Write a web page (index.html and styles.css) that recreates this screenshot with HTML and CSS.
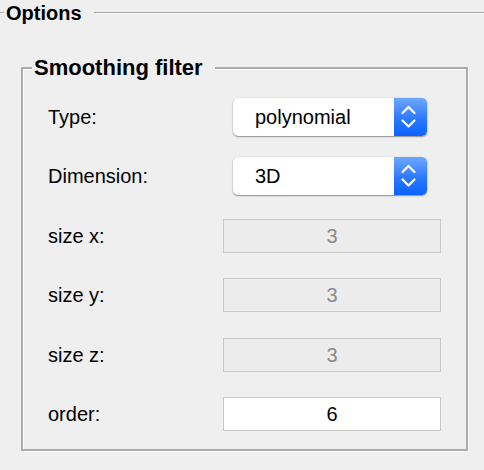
FILE: index.html
```html
<!DOCTYPE html>
<html>
<head>
<meta charset="utf-8">
<link rel="stylesheet" href="styles.css">
</head>
<body>
<div class="panel">
  <div class="options-title">
    <span class="rule rule-lead"></span>
    <span class="title-text">Options</span>
    <span class="rule rule-fill"></span>
  </div>
  <fieldset class="group">
    <legend class="group-title">Smoothing filter</legend>
    <div class="form">
      <div class="label">Type:</div>
      <div class="control">
        <div class="popup">
          <span class="popup-value">polynomial</span>
          <span class="popup-btn">
            <svg class="chevrons" viewBox="0 0 33 38" width="33" height="38">
              <path d="M8.5 15 L14.5 9 L20.5 15" />
              <path d="M8.5 22.5 L14.5 28.5 L20.5 22.5" />
            </svg>
          </span>
        </div>
      </div>
      <div class="label">Dimension:</div>
      <div class="control">
        <div class="popup">
          <span class="popup-value">3D</span>
          <span class="popup-btn">
            <svg class="chevrons" viewBox="0 0 33 38" width="33" height="38">
              <path d="M8.5 15 L14.5 9 L20.5 15" />
              <path d="M8.5 22.5 L14.5 28.5 L20.5 22.5" />
            </svg>
          </span>
        </div>
      </div>
      <div class="label">size x:</div>
      <div class="control"><div class="field disabled">3</div></div>
      <div class="label">size y:</div>
      <div class="control"><div class="field disabled">3</div></div>
      <div class="label">size z:</div>
      <div class="control"><div class="field disabled">3</div></div>
      <div class="label">order:</div>
      <div class="control"><div class="field">6</div></div>
    </div>
  </fieldset>
</div>
</body>
</html>
```

FILE: styles.css
```css
html, body {
  margin: 0;
  padding: 0;
  background: #efefef;
}
body {
  width: 484px;
  height: 470px;
  overflow: hidden;
  font-family: "Liberation Sans", Arial, sans-serif;
  color: #000;
}
.panel {
  display: flex;
  flex-direction: column;
}
.options-title {
  display: flex;
  align-items: center;
  height: 24px;
  padding-top: 1px;
}
.rule {
  display: block;
  height: 0;
  border-top: 1px solid #a8a8a8;
  border-bottom: 1px solid #ffffff;
}
.rule-lead {
  width: 4px;
  margin-right: 2px;
}
.rule-fill {
  flex: 1;
}
.title-text {
  font-weight: bold;
  font-size: 20px;
  line-height: 24px;
  padding-right: 12px;
}
.group {
  margin: 31px 16px 0 21px;
  padding: 7px 0 5px 0;
  border: 2px solid #ababab;
  box-shadow: 1px 1px 0 #ffffff, inset 1px 1px 0 #ffffff;
  min-width: 0;
}
.group-title {
  margin-left: 9px;
  padding: 0 12px 0 2px;
  font-weight: bold;
  font-size: 22px;
  line-height: 24px;
  background: #efefef;
}
.form {
  display: grid;
  grid-template-columns: 175px 1fr;
  grid-auto-rows: 59.5px;
  align-items: center;
  padding: 0 25px;
}
.label {
  font-size: 20px;
  line-height: 24px;
}
.control {
  display: flex;
  align-items: center;
}
.popup {
  display: flex;
  align-items: center;
  height: 38px;
  margin: 0 14px 0 10px;
  flex: 1;
  background: #ffffff;
  border-radius: 5px;
  box-shadow: 0 1px 1.5px rgba(0, 0, 0, 0.38), 0 0 0 0.5px rgba(0, 0, 0, 0.08);
  overflow: hidden;
}
.popup-value {
  flex: 1;
  padding-left: 22px;
  font-size: 20px;
  line-height: 24px;
}
.popup-btn {
  display: flex;
  width: 33px;
  height: 38px;
  background: linear-gradient(#6ea8ff 0%, #2c78ff 55%, #0b62ff 100%);
}
.chevrons path {
  fill: none;
  stroke: #ffffff;
  stroke-width: 2.2;
  stroke-linecap: round;
  stroke-linejoin: round;
}
.field {
  flex: 1;
  box-sizing: border-box;
  height: 34px;
  border: 1px solid #c8c8c8;
  background: #ffffff;
  text-align: center;
  font-size: 20px;
  line-height: 32px;
  color: #000;
}
.field.disabled {
  background: #ececec;
  color: #8a8a8a;
}
```
